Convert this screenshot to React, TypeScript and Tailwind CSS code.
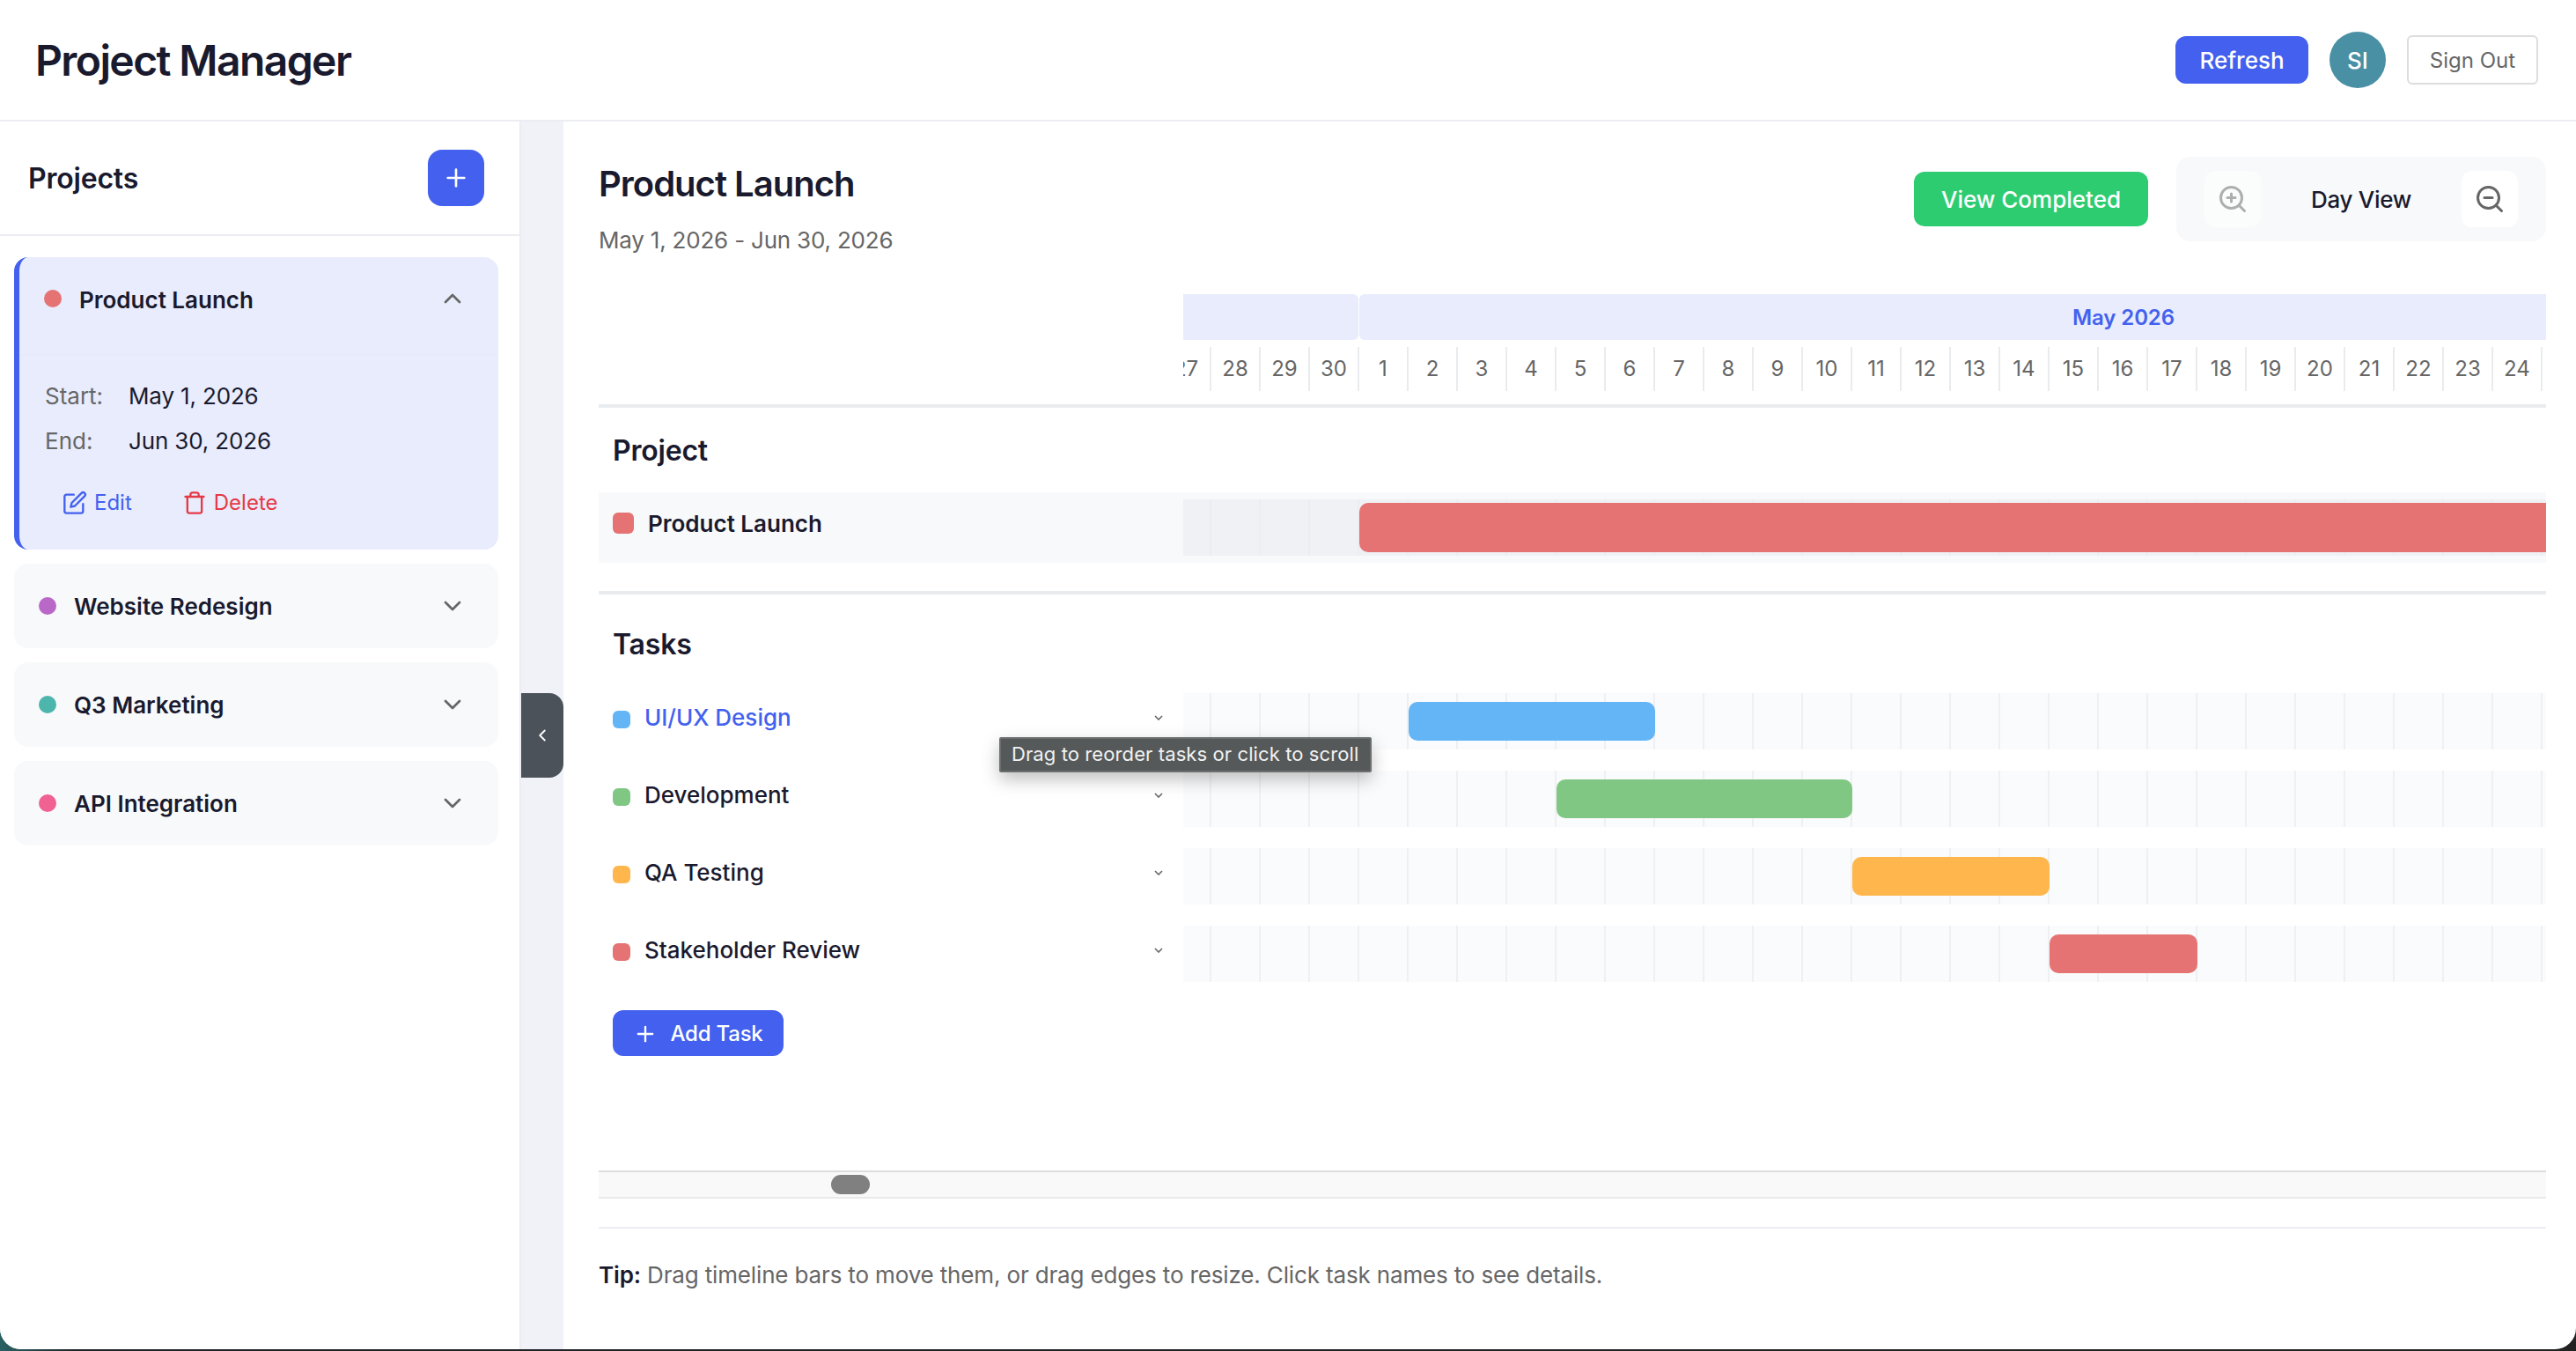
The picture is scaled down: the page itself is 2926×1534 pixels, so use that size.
import React from 'react'
import { FiChevronDown, FiChevronLeft, FiChevronUp, FiEdit, FiPlus, FiTrash, FiZoomIn, FiZoomOut } from 'react-icons/fi'

const DAY_W = 56
const days = [27, 28, 29, 30, ...Array.from({ length: 25 }, (_, i) => i + 1)]

const projects = [
  { name: 'Website Redesign', color: 'bg-[#ba68c8]' },
  { name: 'Q3 Marketing', color: 'bg-[#4db6ac]' },
  { name: 'API Integration', color: 'bg-[#f06292]' },
]

const tasks = [
  { name: 'UI/UX Design', dot: 'bg-[#64b5f6]', from: 2, to: 6, active: true },
  { name: 'Development', dot: 'bg-[#81c784]', from: 5, to: 10 },
  { name: 'QA Testing', dot: 'bg-[#ffb74d]', from: 11, to: 14 },
  { name: 'Stakeholder Review', dot: 'bg-[#e57373]', from: 15, to: 17 },
]

function barStyle(from: number, to: number) {
  return { left: 200 + (from - 1) * DAY_W, width: (to - from + 1) * DAY_W }
}

function GridCells({ line }: { line: string }) {
  return (
    <div className="flex h-full -ml-[24px]">
      {days.map(d => (
        <div key={d} className={`w-[56px] h-full shrink-0 border-r-2 ${line}`} />
      ))}
    </div>
  )
}

function ProjectCard({ name, color }: { name: string; color: string }) {
  return (
    <div className="h-[96px] rounded-[16px] bg-[#f8f9fa] pl-[28px] pr-[36px] flex items-center">
      <span className={`w-[20px] h-[20px] rounded-full ${color}`} />
      <span className="ml-[20px] pt-[1px] text-[26px] font-semibold text-[#1a1a2e]">{name}</span>
      <FiChevronDown className="ml-auto text-[32px] text-[#666666]" />
    </div>
  )
}

function Sidebar() {
  return (
    <aside className="w-[592px] shrink-0 border-r-2 border-[#ecedf3] bg-white flex flex-col">
      <div className="h-[130px] shrink-0 border-b-2 border-[#ecedf3] pl-[32px] pr-[40px] flex items-center justify-between">
        <h2 className="pt-[1px] text-[32px] tracking-[-0.2px] font-semibold text-[#1a1a2e]">Projects</h2>
        <button className="w-[64px] h-[64px] rounded-[16px] bg-[#4361ee] text-white flex items-center justify-center">
          <FiPlus className="text-[32px]" />
        </button>
      </div>
      <div className="pl-[16px] pr-[24px] pt-[24px] flex flex-col gap-[16px]">
        <div className="rounded-[16px] bg-[#e8ecfd] border-l-[6px] border-[#4361ee] h-[332px]">
          <div className="h-[112px] border-b-2 border-[#e6eafa] pl-[28px] pr-[36px] pb-[16px] flex items-center">
            <span className="w-[20px] h-[20px] rounded-full bg-[#e57373]" />
            <span className="ml-[20px] pt-[2px] text-[26px] font-semibold text-[#1a1a2e]">Product Launch</span>
            <FiChevronUp className="ml-auto text-[32px] text-[#666666]" />
          </div>
          <div className="pl-[29px] pt-[20px] text-[26px] leading-[51px]">
            <div className="flex">
              <span className="w-[95px] text-[#666666]">Start:</span>
              <span className="tracking-[-0.15px] text-[#1a1a2e]">May 1, 2026</span>
            </div>
            <div className="flex">
              <span className="w-[95px] text-[#666666]">End:</span>
              <span className="tracking-[-0.15px] text-[#1a1a2e]">Jun 30, 2026</span>
            </div>
          </div>
          <div className="mt-[27px] pl-[49px] flex items-center text-[24px] leading-[36px]">
            <button className="flex items-center gap-[8px] text-[#4361ee]">
              <FiEdit className="text-[28px]" />
              Edit
            </button>
            <button className="ml-[57px] flex items-center gap-[8px] text-[#e63946]">
              <FiTrash className="text-[28px]" />
              Delete
            </button>
          </div>
        </div>
        {projects.map(p => (
          <ProjectCard key={p.name} {...p} />
        ))}
      </div>
    </aside>
  )
}

function TimelineHead() {
  return (
    <div className="flex border-b-4 border-[#e9ecef] pb-[15px]">
      <div className="w-[664px] shrink-0" />
      <div className="flex-1 min-w-0 overflow-hidden">
        <div className="flex gap-[1px] h-[52px]">
          <div className="w-[199px] shrink-0 bg-[#e8ecfd] rounded-r-[6px]" />
          <div className="w-[1736px] shrink-0 pt-[2px] bg-[#e8ecfd] rounded-l-[6px] flex items-center justify-center text-[24px] font-semibold tracking-[-0.1px] text-[#4361ee]">
            May 2026
          </div>
        </div>
        <div className="flex h-[50px] mt-[8px] -ml-[24px]">
          {days.map(d => (
            <div key={d} className="w-[56px] shrink-0 border-r-2 border-[#e9ecef] flex items-center justify-center text-[24px] text-[#666666]">
              {d}
            </div>
          ))}
        </div>
      </div>
    </div>
  )
}

function TaskRow({ name, dot, from, to, active }: { name: string; dot: string; from: number; to: number; active?: boolean }) {
  return (
    <div className="flex h-[64px] relative">
      <div className="w-[664px] shrink-0 pl-[16px] pr-[23px] flex items-center pb-[4px]">
        <span className={`w-[20px] h-[20px] rounded-[6px] ${dot}`} />
        <span className={`ml-[16px] pb-[6px] text-[26px] font-medium ${active ? 'text-[#4361ee]' : 'text-[#1a1a2e]'}`}>{name}</span>
        <svg className="ml-auto mb-[4px]" width="10" height="6" viewBox="0 0 10 6" fill="none" stroke="#666666" strokeWidth="1.6">
          <path d="M1 1l4 4 4-4" />
        </svg>
      </div>
      <div className="flex-1 min-w-0 bg-[#fafbfc] overflow-hidden relative">
        <GridCells line="border-[#eef0f3]" />
        <div className={`absolute top-[10px] h-[44px] rounded-[10px] ${dot}`} style={barStyle(from, to)} />
      </div>
      {active && (
        <div className="absolute left-[455px] top-[50px] z-10 w-[423px] h-[40px] pl-[12px] pb-[1px] flex items-center whitespace-nowrap bg-[#555959] border-2 border-[#6c6f6f] rounded-[2px] shadow-[0_8px_20px_rgba(0,0,0,0.25)] text-[22px] tracking-[0.1px] text-[#f2f2f2]">
          Drag to reorder tasks or click to scroll
        </div>
      )}
    </div>
  )
}

export default function App() {
  return (
    <div className="h-screen overflow-hidden bg-[linear-gradient(90deg,#2a6063_0,#1d2326_3%,#222222_100%)] font-[Inter,sans-serif]">
      <div className="h-[1532px] bg-white rounded-b-[24px] overflow-hidden flex flex-col">
        <header className="h-[138px] shrink-0 border-b-2 border-[#ecedf3] pl-[40px] pr-[43px] flex items-center">
          <h1 className="pt-[2px] text-[48px] tracking-[-1.6px] font-semibold text-[#1a1a2e]">Project Manager</h1>
          <button className="ml-auto w-[151px] h-[54px] rounded-[12px] bg-[#4361ee] text-white text-[26px] font-medium">Refresh</button>
          <div className="ml-[24px] w-[64px] h-[64px] rounded-full bg-[#4a90a4] text-white text-[26px] font-medium flex items-center justify-center">SI</div>
          <button className="ml-[24px] w-[149px] h-[56px] pt-[2px] rounded-[6px] border-2 border-[#dddddd] text-[#666666] text-[24px]">Sign Out</button>
        </header>

        <div className="flex-1 min-h-0 flex">
          <Sidebar />
          <div className="w-[48px] shrink-0 bg-[#f0f2f7] flex items-center">
            <button className="w-[48px] h-[96px] rounded-r-[16px] bg-[#4b5259] text-white flex items-center justify-center">
              <FiChevronLeft className="text-[22px]" />
            </button>
          </div>

          <main className="flex-1 min-w-0 pl-[40px] pr-[34px]">
            <div className="h-[196px] pt-[40px] flex justify-between items-start">
              <div>
                <h2 className="pt-[2px] text-[40px] leading-[58px] tracking-[-1px] font-semibold text-[#1a1a2e]">Product Launch</h2>
                <p className="mt-[15px] text-[26px] leading-[40px] tracking-[-0.2px] text-[#666666]">May 1, 2026 - Jun 30, 2026</p>
              </div>
              <div className="flex items-center gap-[32px]">
                <button className="w-[266px] h-[62px] rounded-[12px] bg-[#2ecc71] text-white text-[26px] font-medium">View Completed</button>
                <div className="w-[420px] h-[96px] rounded-[16px] bg-[#f8f9fa] px-[32px] flex items-center justify-between">
                  <button className="w-[64px] h-[64px] rounded-[12px] bg-white opacity-50 text-[#666666] flex items-center justify-center">
                    <FiZoomIn className="text-[36px]" />
                  </button>
                  <span className="pt-[1px] text-[26px] tracking-[-0.3px] font-medium text-[#1a1a2e]">Day View</span>
                  <button className="w-[64px] h-[64px] rounded-[12px] bg-white text-[#666666] flex items-center justify-center">
                    <FiZoomOut className="text-[36px]" />
                  </button>
                </div>
              </div>
            </div>

            <TimelineHead />

            <div className="pt-[24px] border-b-4 border-[#e9ecef] pb-[32px]">
              <h3 className="pl-[16px] pt-[2px] text-[32px] leading-[46px] tracking-[-0.2px] font-semibold text-[#1a1a2e]">Project</h3>
              <div className="mt-[24px] h-[80px] bg-[#f8f9fa] flex">
                <div className="w-[664px] shrink-0 pl-[16px] flex items-center pb-[10px]">
                  <span className="w-[24px] h-[24px] rounded-[6px] bg-[#e57373]" />
                  <span className="ml-[16px] text-[26px] font-semibold text-[#1a1a2e]">Product Launch</span>
                </div>
                <div className="flex-1 min-w-0 my-[8px] bg-[#f0f1f5] overflow-hidden relative">
                  <GridCells line="border-[#ebedf0]" />
                  <div className="absolute top-[4px] h-[56px] rounded-[10px] bg-[#e57373]" style={barStyle(1, 31)} />
                </div>
              </div>
            </div>

            <div className="pt-[32px]">
              <h3 className="pl-[16px] pt-[2px] text-[32px] leading-[46px] tracking-[-0.2px] font-semibold text-[#1a1a2e]">Tasks</h3>
              <div className="mt-[32px] flex flex-col gap-[24px]">
                {tasks.map(t => (
                  <TaskRow key={t.name} {...t} />
                ))}
              </div>
              <button className="mt-[32px] ml-[16px] w-[194px] h-[52px] pt-[1px] rounded-[12px] bg-[#4361ee] text-white text-[24px] tracking-[-0.2px] font-medium flex items-center justify-center gap-[14px]">
                <FiPlus className="text-[28px]" />
                Add Task
              </button>
            </div>

            <div className="mt-[130px] h-[32px] bg-[#f9f9f9] border-t-2 border-b-2 border-t-[#dddddd] border-b-[#e9e9e9] pl-[264px] flex items-center">
              <div className="w-[44px] h-[22px] rounded-[11px] bg-[#808080]" />
            </div>

            <div className="mt-[32px] border-t-2 border-[#ecedf3] pt-[36px] text-[26px] leading-[34px] tracking-[-0.15px] text-[#666666]">
              <strong className="font-semibold text-[#1a1a2e]">Tip:</strong> Drag timeline bars to move them, or drag edges to resize. Click task names to see details.
            </div>
          </main>
        </div>
      </div>
    </div>
  )
}
